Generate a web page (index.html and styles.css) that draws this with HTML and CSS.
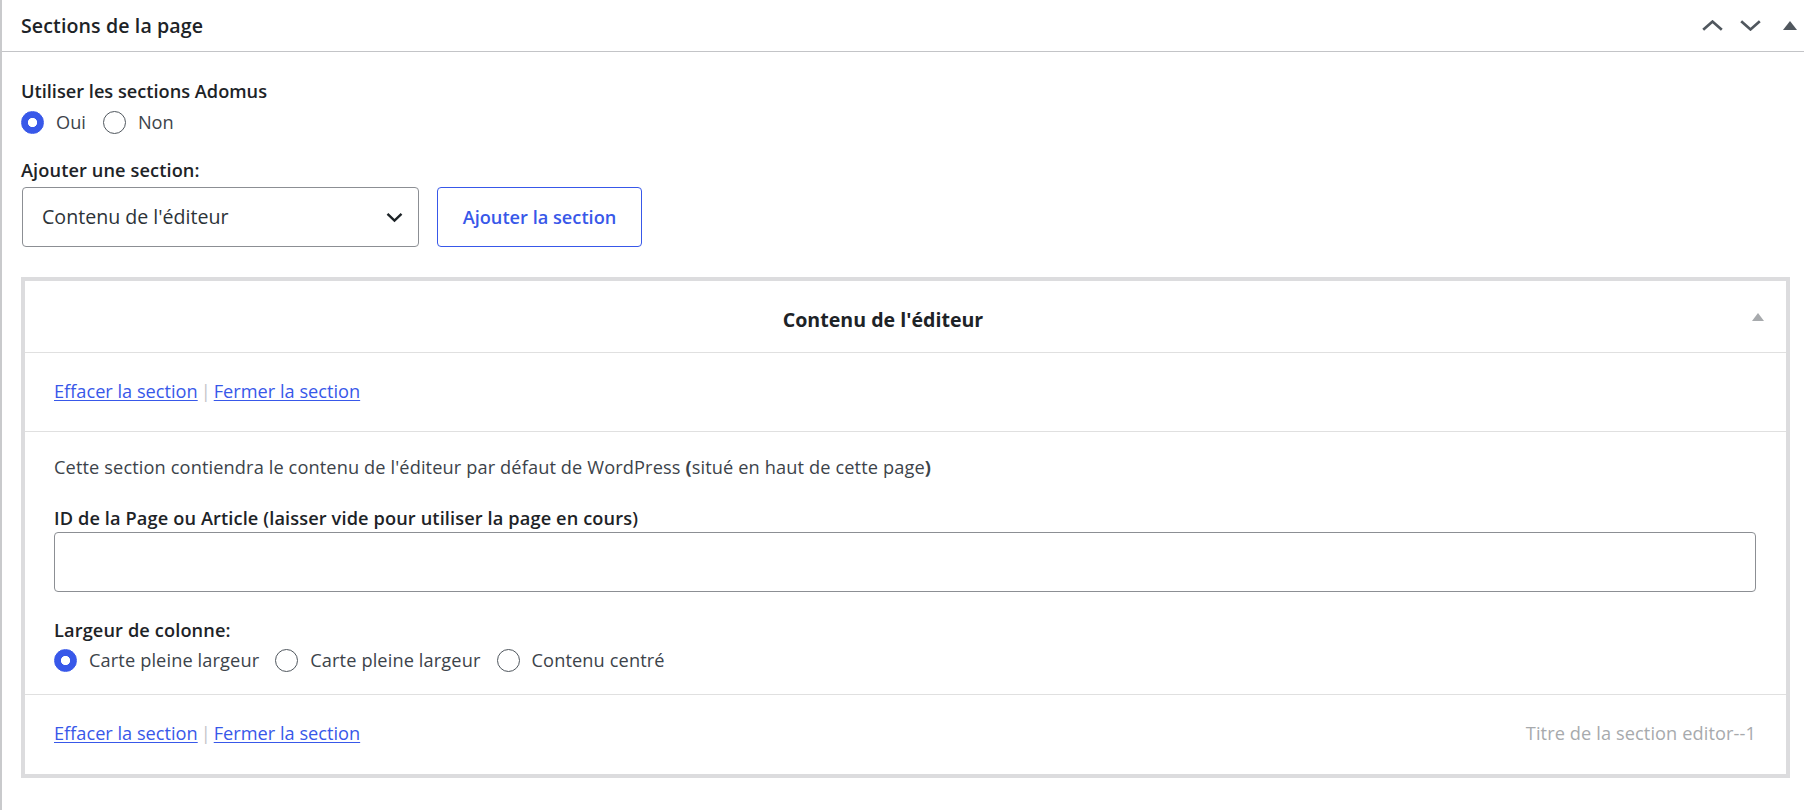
FILE: index.html
```html
<!DOCTYPE html>
<html lang="fr">
<head>
<meta charset="utf-8">
<title>Sections de la page</title>
<link rel="stylesheet" href="styles.css">
</head>
<body>
<div class="postbox">
  <div class="postbox-header">
    <h2 class="hndle">Sections de la page</h2>
    <div class="handle-actions">
      <button class="handle-btn btn-up" type="button" aria-label="Monter">
        <svg width="21" height="11" viewBox="0 0 21 11"><polyline points="1.2,9.8 10.5,1.6 19.8,9.8" fill="none" stroke="#50575e" stroke-width="2.7"/></svg>
      </button>
      <button class="handle-btn btn-down" type="button" aria-label="Descendre">
        <svg width="21" height="11" viewBox="0 0 21 11"><polyline points="1.2,1.2 10.5,9.4 19.8,1.2" fill="none" stroke="#50575e" stroke-width="2.7"/></svg>
      </button>
      <button class="handle-btn btn-toggle" type="button" aria-label="Replier">
        <svg width="14" height="9" viewBox="0 0 14 9"><polygon points="0,9 7,0 14,9" fill="#50575e"/></svg>
      </button>
    </div>
  </div>
  <div class="inside">
    <p class="field-label">Utiliser les sections Adomus</p>
    <div class="radio-row">
      <label class="radio"><input type="radio" name="use" checked>Oui</label>
      <label class="radio"><input type="radio" name="use">Non</label>
    </div>
    <p class="field-label add-label">Ajouter une section:</p>
    <div class="add-row">
      <div class="select">
        <span>Contenu de l'éditeur</span>
        <svg width="17" height="11" viewBox="0 0 17 11"><polyline points="1.5,1.8 8.5,8.6 15.5,1.8" fill="none" stroke="#1d2327" stroke-width="2.4"/></svg>
      </div>
      <button class="btn" type="button">Ajouter la section</button>
    </div>

    <div class="section-box">
      <div class="section-head">
        <h3 class="section-title">Contenu de l'éditeur</h3>
        <span class="section-toggle"><svg width="12" height="8" viewBox="0 0 12 8"><polygon points="0,8 6,0 12,8" fill="#a7aaad"/></svg></span>
      </div>
      <div class="section-links">
        <a href="#" class="link">Effacer la section</a><span class="sep">|</span><a href="#" class="link">Fermer la section</a>
      </div>
      <div class="section-body">
        <p class="desc">Cette section contiendra le contenu de l'éditeur par défaut de WordPress <b class="paren">(</b>situé en haut de cette page<b class="paren">)</b></p>
        <p class="body-label">ID de la Page ou Article (laisser vide pour utiliser la page en cours)</p>
        <input class="text-input" type="text">
        <p class="body-label">Largeur de colonne:</p>
        <div class="radio-row radio-row-body">
          <label class="radio"><input type="radio" name="width" checked>Carte pleine largeur</label>
          <label class="radio"><input type="radio" name="width">Carte pleine largeur</label>
          <label class="radio"><input type="radio" name="width">Contenu centré</label>
        </div>
      </div>
      <div class="section-foot">
        <div><a href="#" class="link">Effacer la section</a><span class="sep">|</span><a href="#" class="link">Fermer la section</a></div>
        <div class="foot-title">Titre de la section editor--1</div>
      </div>
    </div>
  </div>
</div>
</body>
</html>
```

FILE: styles.css
```css
* { box-sizing: border-box; }

html, body {
  margin: 0;
  background: #ffffff;
}

body {
  font-family: "Open Sans", "Noto Sans", "Liberation Sans", sans-serif;
  font-size: 18.2px;
  line-height: 26px;
  color: #3c434a;
}

.postbox {
  border-left: 2px solid #c9cacc;
  min-height: 810px;
}

.postbox-header {
  height: 52px;
  border-bottom: 1px solid #c3c4c7;
  display: flex;
  align-items: center;
  justify-content: space-between;
  padding-left: 19px;
}

.hndle {
  margin: 0;
  font-size: 19.6px;
  line-height: 27px;
  font-weight: 600;
  color: #1d2327;
  letter-spacing: 0.1px;
}

.handle-actions {
  display: flex;
  align-items: center;
  padding-right: 7px;
}

.handle-btn {
  border: 0;
  background: none;
  padding: 0;
  display: flex;
  align-items: center;
  cursor: pointer;
}

.btn-up { margin-right: 17px; }
.btn-down { margin-right: 22px; }

.inside {
  padding: 26px 14px 0 19px;
}

.field-label {
  margin: 0;
  font-weight: 600;
  color: #1d2327;
}

.add-label {
  margin-top: 22px;
  letter-spacing: 0.1px;
}

.radio-row {
  display: flex;
  align-items: center;
  height: 26px;
  margin-top: 5px;
}

.radio {
  display: flex;
  align-items: center;
  margin-right: 17px;
  color: #3c434a;
}

.radio input {
  appearance: none;
  -webkit-appearance: none;
  width: 23px;
  height: 23px;
  margin: 0 12px 0 0;
  border-radius: 50%;
  border: 1.4px solid #50575e;
  background: #ffffff;
}

.radio input:checked {
  border-color: #3858e9;
  background: radial-gradient(circle, #ffffff 0 4.3px, #3858e9 4.9px);
}

.add-row {
  display: flex;
  gap: 18px;
  margin-top: 4px;
  padding-left: 1px;
}

.select {
  width: 397px;
  height: 60px;
  border: 1px solid #8c8f94;
  border-radius: 4px;
  display: flex;
  align-items: center;
  justify-content: space-between;
  padding: 0 15px 0 19px;
  font-size: 19.6px;
  color: #2c3338;
}

.btn {
  width: 205px;
  height: 60px;
  border: 1px solid #3858e9;
  border-radius: 4px;
  background: #ffffff;
  color: #3858e9;
  font-family: inherit;
  font-size: 18.2px;
  font-weight: 600;
  cursor: pointer;
}

.section-box {
  margin-top: 30px;
  border: 4px solid #dcdcde;
}

.section-head {
  display: flex;
  align-items: center;
  height: 72px;
  border-bottom: 1px solid #e0e0e0;
}

.section-title {
  flex: 1;
  margin: 0;
  padding-top: 6px;
  text-align: center;
  font-size: 19.6px;
  font-weight: 700;
  color: #1d2327;
}

.section-toggle {
  width: 45px;
  display: flex;
  align-items: center;
  padding-left: 11px;
}

.section-links {
  padding: 25px 29px 27px;
  border-bottom: 1px solid #e0e0e0;
}

.link {
  color: #3858e9;
  text-decoration: underline;
  text-underline-offset: 2px;
}

.sep {
  display: inline-block;
  width: 16px;
  text-align: center;
  color: #c3c4c7;
}

.section-body {
  padding: 22px 30px 21px 29px;
  border-bottom: 1px solid #e0e0e0;
  letter-spacing: 0.12px;
}

.desc {
  margin: 0;
}

.paren {
  font-weight: 700;
}

.body-label {
  margin: 25px 0 0;
  font-weight: 600;
  color: #1d2327;
}

.text-input {
  display: block;
  width: 100%;
  height: 60px;
  margin-top: 1px;
  border: 1px solid #8c8f94;
  border-radius: 4px;
  background: #ffffff;
  font-family: inherit;
  font-size: 19.6px;
}

.radio-row-body {
  margin-top: 4px;
}

.radio-row-body .radio {
  margin-right: 16px;
}

.section-foot {
  display: flex;
  justify-content: space-between;
  align-items: center;
  padding: 25px 30px 28px 29px;
}

.foot-title {
  color: #a7aaad;
  letter-spacing: 0.1px;
}
```
